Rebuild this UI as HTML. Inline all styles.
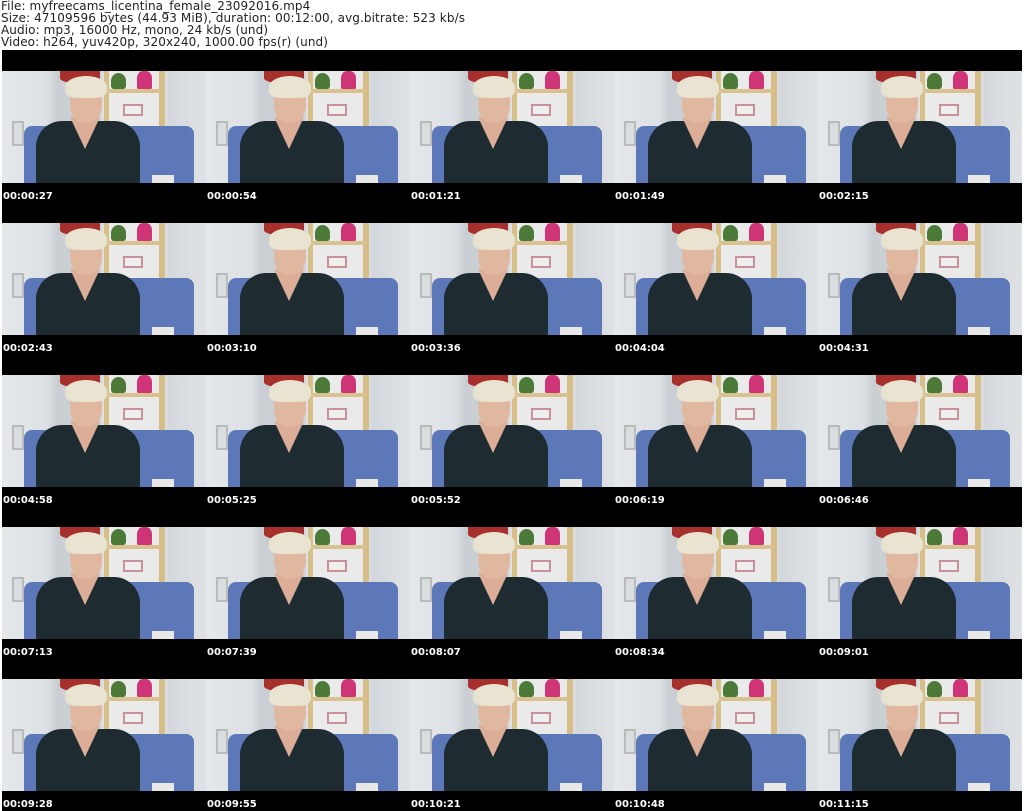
<!DOCTYPE html>
<html><head><meta charset="utf-8"><style>
*{margin:0;padding:0;box-sizing:border-box}
body{width:1024px;height:811px;background:#fff;position:relative;overflow:hidden;font-family:"DejaVu Sans","Liberation Sans",sans-serif}
.hd{position:absolute;left:1px;top:0;font-size:12px;line-height:12px;color:#222;white-space:pre;letter-spacing:0.1px}
.blk{position:absolute;left:2px;top:50px;width:1020px;height:761px;background:#000}
.c{position:absolute;width:204px;height:112px;overflow:hidden;background:linear-gradient(90deg,#e4e8eb 0,#dde1e5 45px,#c9ced3 55px,#cfd3d8 98px,#ecebeb 104px,#e9e9ea 160px,#d4d8dc 166px,#dfe2e5 204px)}
.c div{position:absolute}
.p1{left:102px;top:0;width:5px;height:60px;background:#d8bf88}
.p2{left:157px;top:0;width:6px;height:62px;background:#d6bc86}
.sh{left:104px;top:18px;width:56px;height:4px;background:#d9c28e}
.fl{left:58px;top:0;width:40px;height:12px;background:#a8302c;border-radius:0 0 40% 40%}
.pl{left:109px;top:2px;width:15px;height:16px;background:#4b7a38;border-radius:50% 50% 20% 20%}
.lp{left:135px;top:0;width:15px;height:18px;background:#cf3576;border-radius:40% 40% 10% 10%}
.fr{left:121px;top:33px;width:20px;height:12px;border:2px solid #c89098;background:#eee}
.wf{left:10px;top:50px;width:12px;height:25px;border:2px solid #bbb;background:#d8dde0}
.so{left:22px;top:55px;width:170px;height:57px;background:#5d78b8;border-radius:8px 8px 0 0}
.dr{left:34px;top:50px;width:104px;height:62px;background:#1e2c32;border-radius:26px 26px 0 0}
.nk{left:68px;top:46px;width:30px;height:32px;background:#dcae98;clip-path:polygon(0 0,100% 0,50% 100%)}
.fa{left:68px;top:12px;width:32px;height:40px;background:#e0b8a0;border-radius:45%}
.ha{left:63px;top:5px;width:42px;height:22px;background:#e9e3d2;border-radius:50% 50% 30% 30%}
.cu{left:150px;top:104px;width:22px;height:8px;background:#e8e8e8}
.t{position:absolute;color:#fff;font-weight:bold;font-size:10px;line-height:12px}
</style></head><body>
<div class="hd">File: myfreecams_licentina_female_23092016.mp4
Size: 47109596 bytes (44.93 MiB), duration: 00:12:00, avg.bitrate: 523 kb/s
Audio: mp3, 16000 Hz, mono, 24 kb/s (und)
Video: h264, yuv420p, 320x240, 1000.00 fps(r) (und)</div>
<div class="blk"></div>
<div id="g"></div>
<script>
var ts=["00:00:27","00:00:54","00:01:21","00:01:49","00:02:15","00:02:43","00:03:10","00:03:36","00:04:04","00:04:31","00:04:58","00:05:25","00:05:52","00:06:19","00:06:46","00:07:13","00:07:39","00:08:07","00:08:34","00:09:01","00:09:28","00:09:55","00:10:21","00:10:48","00:11:15"];
var h="";
for(var r=0;r<5;r++)for(var k=0;k<5;k++){var x=2+k*204,y=71+r*152;
h+='<div class="c" style="left:'+x+'px;top:'+y+'px"><div class="wf"></div><div class="p1"></div><div class="p2"></div><div class="sh"></div><div class="fl"></div><div class="pl"></div><div class="lp"></div><div class="fr"></div><div class="so"></div><div class="cu"></div><div class="dr"></div><div class="nk"></div><div class="fa"></div><div class="ha"></div></div>';
h+='<div class="t" style="left:'+(x+1)+'px;top:'+(y+120)+'px">'+ts[r*5+k]+'</div>';}
document.getElementById("g").innerHTML=h;
</script>
</body></html>
